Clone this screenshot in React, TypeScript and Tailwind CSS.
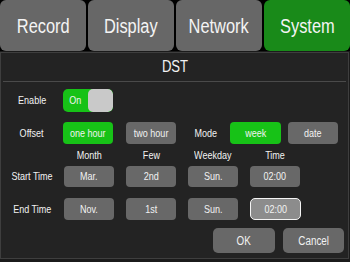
import React from "react";

const T = ({ children }: { children: React.ReactNode }) => (
  <span className="inline-block whitespace-nowrap scale-x-[0.82]">{children}</span>
);

const Btn = ({ children, green = false, w = "w-[50px]", h = "h-[21px]", extra = "" }: { children: React.ReactNode; green?: boolean; w?: string; h?: string; extra?: string }) => (
  <div
    className={`${w} ${h} ${extra} ${green ? "bg-[#17c217]" : "bg-[#686868]"} rounded-[4px] flex items-center justify-center text-[11px] text-[#f2f2f2] shrink-0`}
  >
    <T>{children}</T>
  </div>
);

export default function App() {
  const tabs = ["Record", "Display", "Network"];
  return (
    <div className="w-[350px] h-[262px] bg-[#1b1b1b] overflow-hidden [font-family:'Liberation_Sans',Arial,sans-serif] text-[#f2f2f2]">
      <div className="flex gap-[2px] h-[51px] bg-black">
        {tabs.map((t) => (
          <div key={t} className="flex-1 rounded-[6px] bg-[#676767] flex items-center justify-center text-[20px] text-[#f4f4f4]">
            <T>{t}</T>
          </div>
        ))}
        <div className="flex-1 rounded-[6px] bg-[#198a19] flex items-center justify-center text-[20px] text-[#f4f4f4]">
          <T>System</T>
        </div>
      </div>
      <div className="mt-[1px] h-[207px] w-[349px] border border-[#3e3e3e] bg-[#232323] flex flex-col">
        <div className="h-[28px] flex items-center justify-center text-[16px]">
          <T>DST</T>
        </div>
        <div className="mx-[2px] h-[1px] bg-[#4a4a4a]" />
        {/* Enable */}
        <div className="mt-[7px] h-[23px] flex items-center">
          <div className="w-[62px] text-center text-[11px]"><T>Enable</T></div>
          <div className="w-[50px] h-[23px] rounded-[5px] bg-[#17c217] flex overflow-hidden">
            <div className="w-[25px] flex items-center justify-center text-[11px]"><T>On</T></div>
            <div className="w-[25px] rounded-[5px] bg-[#c9c9c9]" />
          </div>
        </div>
        {/* Offset */}
        <div className="mt-[10px] h-[22px] flex items-center">
          <div className="w-[62px] text-center text-[11px]"><T>Offset</T></div>
          <Btn green h="h-[22px]">one hour</Btn>
          <Btn h="h-[22px]" extra="ml-[13px]">two hour</Btn>
          <div className="ml-[6px] w-[48px] text-center text-[11px]"><T>Mode</T></div>
          <Btn green w="w-[51px]" h="h-[22px]">week</Btn>
          <Btn h="h-[22px]" extra="ml-[7px]">date</Btn>
        </div>
        {/* Header */}
        <div className="mt-[4px] h-[14px] flex items-center text-[11px]">
          <div className="w-[62px]" />
          <div className="ml-[1px] w-[50px] text-center"><T>Month</T></div>
          <div className="ml-[12px] w-[50px] text-center"><T>Few</T></div>
          <div className="ml-[12px] w-[50px] text-center"><T>Weekday</T></div>
          <div className="ml-[12px] w-[50px] text-center"><T>Time</T></div>
        </div>
        {/* Start Time */}
        <div className="mt-[4px] h-[21px] flex items-center">
          <div className="w-[62px] text-center text-[11px]"><T>Start Time</T></div>
          <Btn extra="ml-[1px]">Mar.</Btn>
          <Btn extra="ml-[12px]">2nd</Btn>
          <Btn extra="ml-[12px]">Sun.</Btn>
          <Btn extra="ml-[12px]">02:00</Btn>
        </div>
        {/* End Time */}
        <div className="mt-[11px] h-[22px] flex items-center">
          <div className="w-[62px] text-center text-[11px]"><T>End Time</T></div>
          <Btn h="h-[22px]" extra="ml-[1px]">Nov.</Btn>
          <Btn h="h-[22px]" extra="ml-[12px]">1st</Btn>
          <Btn h="h-[22px]" extra="ml-[12px]">Sun.</Btn>
          <div className="ml-[12px] w-[51px] h-[22px] rounded-[5px] bg-[#8c8c8c] border-[1.5px] border-[#f4f4f4] flex items-center justify-center text-[11px]">
            <T>02:00</T>
          </div>
        </div>
        {/* OK / Cancel */}
        <div className="mt-[8px] h-[25px] flex justify-end gap-[8px] pr-[4px]">
          <div className="w-[62px] h-[25px] rounded-[5px] bg-[#686868] flex items-center justify-center text-[12px]"><T>OK</T></div>
          <div className="w-[61px] h-[25px] rounded-[5px] bg-[#686868] flex items-center justify-center text-[12px]"><T>Cancel</T></div>
        </div>
      </div>
    </div>
  );
}
